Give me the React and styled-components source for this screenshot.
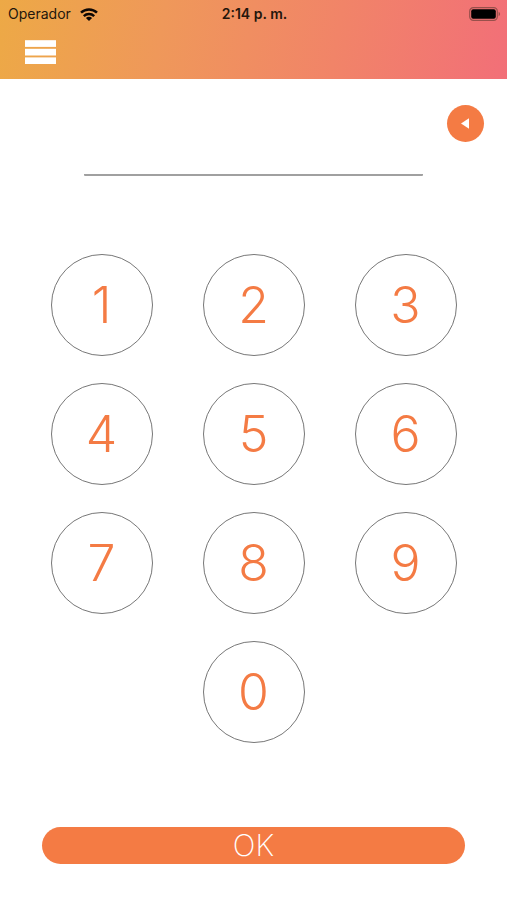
import React, { useState } from "react";
import styled, { createGlobalStyle } from "styled-components";

const GlobalStyle = createGlobalStyle`
  * {
    box-sizing: border-box;
  }
  body {
    margin: 0;
    background: #ffffff;
    font-family: "Inter", "Liberation Sans", sans-serif;
  }
  button {
    padding: 0;
    font-family: inherit;
    cursor: pointer;
  }
`;

const Page = styled.div`
  display: flex;
  flex-direction: column;
  min-height: 100vh;
`;

const Header = styled.header`
  height: 79px;
  background: linear-gradient(100deg, #eda946 0%, #ef985a 32%, #f18468 66%, #f26f78 100%);
`;

const StatusBar = styled.div`
  display: grid;
  grid-template-columns: 1fr auto 1fr;
  align-items: center;
  height: 28px;
  padding: 0 6px 0 8px;
  font-size: 14px;
  line-height: 28px;
  color: #24160c;
`;

const Carrier = styled.div`
  display: flex;
  align-items: center;
  gap: 9px;
`;

const Time = styled.div`
  font-weight: 600;
`;

const Battery = styled.svg`
  justify-self: end;
`;

const MenuButton = styled.button`
  display: block;
  margin: 12px 0 0 25px;
  width: 31px;
  height: 24px;
  border: none;
  background: none;
`;

const Main = styled.main`
  display: flex;
  flex-direction: column;
  align-items: center;
  flex: 1;
  padding: 26px 0 36px;
`;

const BackButton = styled.button`
  display: flex;
  align-items: center;
  justify-content: center;
  align-self: flex-end;
  margin-right: 23px;
  width: 37px;
  height: 37px;
  border: none;
  border-radius: 50%;
  background: #f47b44;
`;

const CodeInput = styled.input`
  width: 66.67%;
  height: 34px;
  padding: 0;
  border: none;
  border-bottom: 2px solid #a0a0a0;
  border-radius: 1px;
  outline: none;
  background: none;
  color: #f47b44;
  font-family: inherit;
  font-size: 24px;
  text-align: center;
`;

const Keypad = styled.div`
  display: grid;
  grid-template-columns: repeat(3, 102px);
  justify-content: center;
  gap: 27px 50px;
  margin-top: 78px;
`;

const Key = styled.button`
  grid-column: ${(props) => (props.$center ? 2 : "auto")};
  height: 102px;
  border: 1px solid #777777;
  border-radius: 50%;
  background: #ffffff;
  color: #f47b44;
  font-size: 50px;
  font-weight: 300;
  line-height: 60px;
`;

const OkButton = styled.button`
  margin-top: auto;
  width: 83.33%;
  height: 37px;
  border: none;
  border-radius: 19px;
  background: #f47b44;
  color: #ffffff;
  font-size: 30px;
  font-weight: 200;
  line-height: 37px;
`;

const keys = ["1", "2", "3", "4", "5", "6", "7", "8", "9", "0"];

const App = () => {
  const [code, setCode] = useState("");

  return (
    <Page>
      <GlobalStyle />
      <Header>
        <StatusBar>
          <Carrier>
            Operador
            <svg width="18" height="13" viewBox="0 0 18 13" aria-hidden="true">
              <g fill="none" stroke="#0d0704" strokeWidth="2.5">
                <path d="M1 4.7C5.4.4 12.6.4 17 4.7" />
                <path d="M3.8 8.1c2.900-2.700 7.500-2.700 10.400 0" />
              </g>
              <path d="M5.900 9.900c1.800-1.600 4.400-1.600 6.200 0L9 13z" fill="#0d0704" />
            </svg>
          </Carrier>
          <Time>2:14 p. m.</Time>
          <Battery width="32" height="14" viewBox="0 0 32 14" aria-hidden="true">
            <rect x=".7" y=".7" width="27.6" height="12.6" rx="3.6" fill="none" stroke="#98504b" strokeWidth="1.2" />
            <rect x="2.2" y="2.2" width="24.6" height="9.6" rx="2" fill="#000000" />
            <path d="M29.6 4.8c2 .8 2 3.6 0 4.4z" fill="#98504b" />
          </Battery>
        </StatusBar>
        <MenuButton aria-label="Menú">
          <svg width="31" height="24" viewBox="0 0 31 24" fill="#ffffff" display="block">
            <rect y=".2" width="31" height="6.7" />
            <rect y="8.8" width="31" height="6.7" />
            <rect y="17.4" width="31" height="6.6" />
          </svg>
        </MenuButton>
      </Header>
      <Main>
        <BackButton aria-label="Borrar" onClick={() => setCode(code.slice(0, -1))}>
          <svg width="9" height="11" viewBox="0 0 9 11">
            <path d="M0 5.5 8 .2v10.600z" fill="#ffffff" />
          </svg>
        </BackButton>
        <CodeInput
          type="text"
          inputMode="numeric"
          aria-label="Código"
          value={code}
          onChange={(e) => setCode(e.target.value)}
        />
        <Keypad>
          {keys.map((key) => (
            <Key key={key} $center={key === "0"} onClick={() => setCode(code + key)}>
              {key}
            </Key>
          ))}
        </Keypad>
        <OkButton>OK</OkButton>
      </Main>
    </Page>
  );
};

export default App;
